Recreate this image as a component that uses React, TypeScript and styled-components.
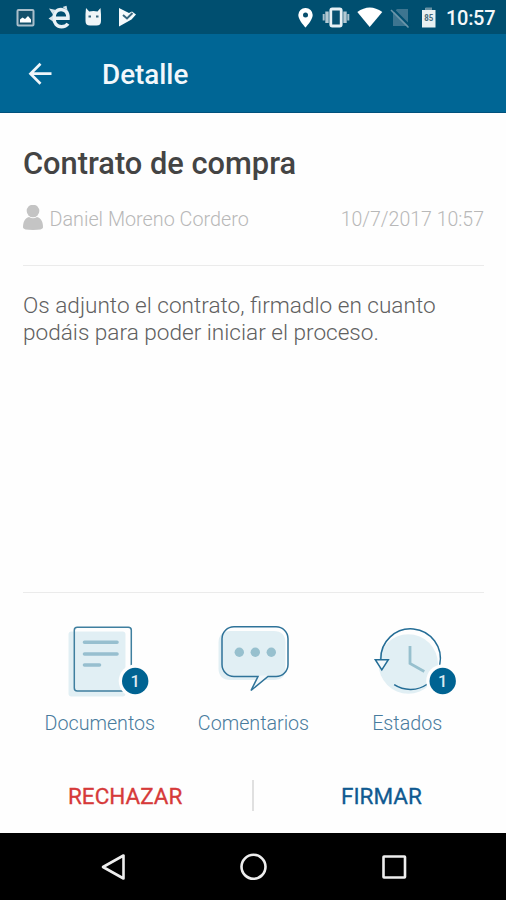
import React from 'react';
import styled, { createGlobalStyle } from 'styled-components';

const Global = createGlobalStyle`
  * { box-sizing: border-box; }
  body { margin: 0; background: #fff; font-family: Roboto, "Liberation Sans", sans-serif; }
  svg { display: block; flex: none; }
`;

const Screen = styled.div`
  width: 506px;
  height: 900px;
  display: flex;
  flex-direction: column;
  background: #fefefe;
  overflow: hidden;
`;

const StatusBar = styled.div`
  height: 34px;
  flex: none;
  background: #004f70;
  display: flex;
  justify-content: space-between;
`;

const Clock = styled.span`
  font-size: 20px;
  line-height: 36px;
  font-weight: 500;
  color: #f4f8fa;
  width: 60px;
  letter-spacing: -0.3px;
`;

const StatusRight = styled.div`
  display: flex;
`;

const AppBar = styled.header`
  height: 79px;
  flex: none;
  background: #006695;
  border-bottom: 1px solid #00517c;
  display: flex;
  align-items: center;
  padding-left: 28px;
`;

const AppTitle = styled.h1`
  margin: 4px 0 0 49px;
  font-size: 27.8px;
  font-weight: 500;
  line-height: 32px;
  color: #f3f8fb;
`;

const Content = styled.main`
  height: 720px;
  flex: none;
  padding: 0 22px 0 23px;
  display: flex;
  flex-direction: column;
`;

const Subject = styled.h2`
  margin: 33px 0 0;
  font-size: 30.8px;
  line-height: 36px;
  font-weight: 500;
  color: #444;
  white-space: nowrap;
`;

const Meta = styled.div`
  margin-top: 21px;
  height: 30px;
  display: flex;
  align-items: center;
  color: #b8b8b8;
  font-size: 19.8px;
  font-weight: 300;
  line-height: 30px;
`;

const Author = styled.span`
  margin: 4px 0 0 6.5px;
`;

const DateText = styled.time`
  margin: 4px 0 0 auto;
  font-size: 19.5px;
`;

const Rule = styled.hr<{ $top: number }>`
  width: 100%;
  height: 1px;
  flex: none;
  border: 0;
  margin: ${(p) => p.$top}px 0 0;
  background: #ebebeb;
`;

const Message = styled.p`
  margin: 27px 0 0;
  height: 54px;
  font-size: 22.58px;
  line-height: 26.5px;
  font-weight: 300;
  color: #606060;
  white-space: nowrap;
`;

const Actions = styled.nav`
  margin-top: 29px;
  display: grid;
  grid-template-columns: repeat(3, 1fr);
`;

const Action = styled.div`
  display: flex;
  flex-direction: column;
  align-items: center;
`;

const ActionLabel = styled.span`
  margin-top: 14px;
  font-size: 19.7px;
  line-height: 24px;
  font-weight: 300;
  color: #487b9d;
`;

const BadgeText = styled.text`
  font-size: 16.5px;
  font-weight: 500;
  fill: #dceaf1;
  text-anchor: middle;
`;

const Footer = styled.div`
  margin-top: 43px;
  height: 32px;
  display: grid;
  grid-template-columns: 229px 3px 1fr;
  align-items: center;
`;

const FooterButton = styled.button<{ $color: string; $shift: number }>`
  border: 0;
  margin-top: 1px;
  padding: 0 0 0 ${(p) => p.$shift}px;
  background: none;
  text-align: left;
  font: 400 22.5px/32px Roboto, "Liberation Sans", sans-serif;
  -webkit-text-stroke: 0.3px ${(p) => p.$color};
  color: ${(p) => p.$color};
`;

const Divider = styled.span`
  width: 2px;
  height: 31px;
  background: #e0e0e0;
`;

const NavBar = styled.div`
  height: 67px;
  flex: none;
  background: #000;
`;

const Badge = ({ cx }: { cx: number }) => (
  <>
    <circle cx={cx} cy={59} r={16.5} fill="#fefefe" />
    <circle cx={cx} cy={59} r={13.2} fill="#006392" />
    <BadgeText x={cx} y={65}>1</BadgeText>
  </>
);

const DocumentIcon = () => (
  <svg width="104" height="76" viewBox="48 622 104 76">
    <rect x="68.5" y="631.5" width="57" height="65" rx="3" fill="#e1eff4" />
    <rect x="74.3" y="627.2" width="57" height="63.8" rx="3" fill="none" stroke="#3f7f9f" strokeWidth="1.5" />
    <path d="M84.5 642.3H117M84.5 654H117M84.5 665H99.5" stroke="#97bfcf" strokeWidth="3.6" strokeLinecap="round" />
    <g transform="translate(0 622)"><Badge cx={135.2} /></g>
  </svg>
);

const CommentIcon = () => (
  <svg width="104" height="76" viewBox="201.5 622 104 76">
    <path d="M231 631H274Q286 631 286 643V669Q286 680 274 680H231Q219 680 219 668V643Q219 631 231 631Z" fill="#e1eff4" />
    <path d="M258.500 675.500H268.500L251.500 690.500Z" fill="#f2f8fa" />
    <path d="M234.500 626.700H276.500A12 12 0 0 1 288.500 638.700V664.500A12 12 0 0 1 276.500 676.500H268.500L251.500 690.500L258.500 676.500H234.500A12 12 0 0 1 222.500 664.500V638.700A12 12 0 0 1 234.500 626.700Z" fill="none" stroke="#2f7399" strokeWidth="1.5" />
    <g fill="#97c0ce"><circle cx="239.800" cy="652.300" r="4.700" /><circle cx="255.800" cy="652.300" r="4.700" /><circle cx="271.800" cy="652.300" r="4.700" /></g>
  </svg>
);

const HistoryIcon = () => (
  <svg width="104" height="76" viewBox="355 622 104 76">
    <circle cx="408.300" cy="664" r="29.700" fill="#e1eff4" />
    <g fill="none" stroke="#246d96" strokeWidth="1.500">
      <path d="M380.800 659.500A29.800 29.800 0 1 1 439.700 665" />
      <path d="M394.200 684.700A29.800 29.800 0 0 0 427.500 684" />
      <path d="M375.300 659.700H388.300L381.800 669.800Z" fill="#f4f9fb" />
    </g>
    <path d="M410 646V663.500L424.300 671.500" fill="none" stroke="#97c0ce" strokeWidth="2.800" />
    <g transform="translate(0 622)"><Badge cx={442.700} /></g>
  </svg>
);

const NotificationIcons = () => (
  <svg width="150" height="34" viewBox="0 0 150 34">
    <rect x="17.500" y="10" width="16" height="15.500" rx="1" fill="#14506b" stroke="#a9bfcb" strokeWidth="2" />
    <path d="M20 22.500V19.500L22.500 17.500L25 19L28 16L31 19.500V22.500Z" fill="#fff" />
    <path d="M54.500 18.300H68C68.300 12 65 9.400 61 9.400C56.500 9.400 54 13 54 18C54 23.500 57 26.800 61.500 26.800C64.500 26.800 66.500 25.800 68 23.800" fill="none" stroke="#e9f2f6" strokeWidth="3.500" />
    <path d="M49 8.500L56 10L52.500 14ZM62.500 7L66.500 5.800L67.500 10.500ZM48.500 18.500L53 15.500V21.500Z" fill="#d5e3ea" />
    <path d="M86 8L89.200 11.500Q93.500 10.700 97.500 11.500L100.500 8L101 14.500V21Q101 25.500 96.500 25.500H90Q85.500 25.500 85.500 21V14Z" fill="#eff5f7" />
    <path d="M88.500 16.500H91M96 16.500H98.500" stroke="#36677f" strokeWidth="2" />
    <path d="M119 8L129 13L132 11.500L136 14.500L131.500 19.500L119 26.500Z" fill="#f5fafc" />
    <path d="M123 15L127 18.500L132.500 13" fill="none" stroke="#36677f" strokeWidth="2" />
  </svg>
);

const SystemIcons = () => (
  <svg width="156" height="34" viewBox="290 0 156 34">
    <path d="M305.500 8A7 7 0 0 0 298.300 15C298.300 20 305.500 27.500 305.500 27.500S312.700 20 312.700 15A7 7 0 0 0 305.500 8Z" fill="#fff" />
    <circle cx="305.500" cy="15" r="2.500" fill="#074d6c" />
    <path d="M327 11.500V23M345 11.500V23" stroke="#b4c9d3" strokeWidth="3.400" />
    <path d="M323.700 14V20.500M348.300 14V20.500" stroke="#a7c0cc" strokeWidth="2" />
    <rect x="330.800" y="9" width="10.400" height="17" rx="1.500" fill="#075171" stroke="#e8f1f5" strokeWidth="2.800" />
    <path d="M357.300 12Q369.700 3 382.300 12L369.700 27Z" fill="#fff" />
    <path d="M397 9H408V26H393V13Z" fill="#3d7590" />
    <path d="M392.500 8.500L410 26" stroke="#004f70" strokeWidth="2" />
    <path d="M391 10L408.500 27.500" stroke="#6c96aa" strokeWidth="1.600" />
    <path d="M425.500 8H432V10H435.500V27.500H422V10H425.500Z" fill="#e8f0f1" />
    <rect x="425.500" y="7.500" width="6.500" height="2.500" fill="#6992a3" />
    <text x="424.300" y="20.500" textLength="9" lengthAdjust="spacingAndGlyphs" fontSize="9" fontWeight="700" fill="#466b7c">85</text>
  </svg>
);

export default function App() {
  return (
    <Screen>
      <Global />
      <StatusBar>
        <NotificationIcons />
        <StatusRight>
          <SystemIcons />
          <Clock>10:57</Clock>
        </StatusRight>
      </StatusBar>
      <AppBar>
        <svg width="25" height="26" viewBox="28 60 25 26">
          <path d="M51.500 73.700H30.500M40.500 63.700L30.500 73.700L40.500 83.700" fill="none" stroke="#eff6fa" strokeWidth="2.700" />
        </svg>
        <AppTitle>Detalle</AppTitle>
      </AppBar>
      <Content>
        <Subject>Contrato de compra</Subject>
        <Meta>
          <svg width="20" height="26" viewBox="23 204.500 20 26">
            <circle cx="33" cy="210.500" r="6.300" fill="#c4c4c4" />
            <path d="M29 216.500Q33 219 37 216.500C41 217.500 43 221 43 227Q43 229.500 33 229.500T23 227C23 221 25 217.500 29 216.500Z" fill="#c4c4c4" />
          </svg>
          <Author>Daniel Moreno Cordero</Author>
          <DateText>10/7/2017 10:57</DateText>
        </Meta>
        <Rule $top={32} />
        <Message>
          Os adjunto el contrato, firmadlo en cuanto
          <br />
          podáis para poder iniciar el proceso.
        </Message>
        <Rule $top={245} />
        <Actions>
          <Action><DocumentIcon /><ActionLabel>Documentos</ActionLabel></Action>
          <Action><CommentIcon /><ActionLabel>Comentarios</ActionLabel></Action>
          <Action><HistoryIcon /><ActionLabel>Estados</ActionLabel></Action>
        </Actions>
        <Footer>
          <FooterButton $color="#d63a3a" $shift={45}>RECHAZAR</FooterButton>
          <Divider />
          <FooterButton $color="#105a91" $shift={86}>FIRMAR</FooterButton>
        </Footer>
      </Content>
      <NavBar>
        <svg width="506" height="67" viewBox="0 833 506 67" fill="none" stroke="#eee" strokeWidth="2.600">
          <path d="M123.500 855.500V878.500L103 867Z" strokeLinejoin="round" />
          <circle cx="253.500" cy="866.800" r="12" />
          <rect x="383.500" y="856.500" width="21.500" height="21" rx="0.500" />
        </svg>
      </NavBar>
    </Screen>
  );
}
